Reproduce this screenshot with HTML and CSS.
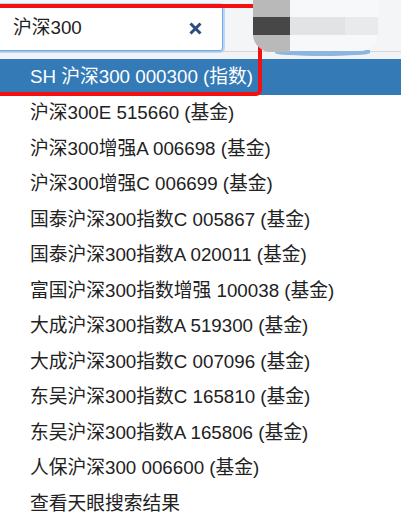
FILE: index.html
```html
<!DOCTYPE html>
<html lang="zh-CN">
<head>
<meta charset="utf-8">
<title>搜索</title>
<link rel="stylesheet" href="styles.css">
</head>
<body>
<div class="header">
  <div class="bar">
    <div class="search">
      <span class="query">沪深300</span>
      <svg class="clear" width="13" height="13" viewBox="0 0 13 13"><path d="M1.5 1.5L11.5 11.5M11.5 1.5L1.5 11.5" stroke="#2b4c7e" stroke-width="3" stroke-linecap="butt"/></svg>
    </div>
    <div class="blur">
      <div class="blur-gray"><div class="blur-dark"></div></div>
      <div class="blur-panel">
        <div class="stripe s1"></div>
        <div class="stripe s2"></div>
      </div>
    </div>
  </div>
</div>
<ul class="results">
  <li class="item active">SH 沪深300 000300 (指数)</li>
  <li class="item">沪深300E 515660 (基金)</li>
  <li class="item">沪深300增强A 006698 (基金)</li>
  <li class="item">沪深300增强C 006699 (基金)</li>
  <li class="item">国泰沪深300指数C 005867 (基金)</li>
  <li class="item">国泰沪深300指数A 020011 (基金)</li>
  <li class="item">富国沪深300指数增强 100038 (基金)</li>
  <li class="item">大成沪深300指数A 519300 (基金)</li>
  <li class="item">大成沪深300指数C 007096 (基金)</li>
  <li class="item">东吴沪深300指数C 165810 (基金)</li>
  <li class="item">东吴沪深300指数A 165806 (基金)</li>
  <li class="item">人保沪深300 006600 (基金)</li>
  <li class="item">查看天眼搜索结果</li>
</ul>
<div class="mark"></div>
</body>
</html>
```
FILE: styles.css
```css
html, body {
  margin: 0;
  padding: 0;
  background: #ffffff;
  overflow: hidden;
}
body {
  position: relative;
  font-family: "Liberation Sans", Arial, "Noto Sans CJK SC", sans-serif;
  width: 401px;
  height: 523px;
}
.header {
  height: 59px;
  background: #f1f3f6;
}
.bar {
  height: 51px;
  border-bottom: 1px solid #d4d6d9;
  display: flex;
  align-items: flex-start;
  background: #f4f5f7;
}
.search {
  margin-left: -10px;
  margin-top: 5px;
  width: 233px;
  height: 46px;
  box-sizing: border-box;
  background: #ffffff;
  border: 1px solid #6aaaea;
  border-radius: 3px;
  box-shadow: 0 0 0 2px rgba(140, 190, 240, 0.55);
  display: flex;
  align-items: center;
  padding-left: 22px;
  padding-right: 20px;
}
.query {
  flex: 1;
  font-size: 18.75px;
  color: #222222;
  line-height: 22px;
}
.clear {
  display: block;
}
.blur {
  margin-left: 30px;
  display: flex;
  height: 52px;
  position: relative;
}
.blur::after {
  content: "";
  position: absolute;
  left: 22px;
  right: 8px;
  bottom: -4px;
  height: 6px;
  border-radius: 0 0 50% 50%;
  background: #8cb6de;
  z-index: 0;
}
.blur-gray {
  width: 37px;
  height: 52px;
  background: #b9b9b9;
  border-bottom-left-radius: 18px;
  padding-top: 17px;
  box-sizing: border-box;
  position: relative;
  z-index: 1;
}
.blur-dark {
  height: 18px;
  background: #474747;
}
.blur-panel {
  width: 88px;
  height: 51px;
  background: #f7f8fa;
  border-bottom-right-radius: 18px;
  padding-top: 17px;
  box-sizing: border-box;
  display: flex;
  align-items: flex-start;
  position: relative;
  z-index: 1;
}
.stripe {
  height: 18px;
}
.s1 {
  width: 55px;
  background: #e2e3e4;
}
.s2 {
  width: 33px;
  background: #e9eaec;
}
.results {
  list-style: none;
  margin: 0;
  padding: 0;
}
.item {
  font-size: 18.75px;
  line-height: 35.5px;
  height: 35.5px;
  padding-left: 30px;
  color: #222222;
  white-space: nowrap;
}
.item.active {
  background: #337ab7;
  color: #ffffff;
  height: 36px;
  line-height: 36px;
}
.mark {
  position: absolute;
  left: -10px;
  top: 4px;
  width: 272px;
  height: 92px;
  box-sizing: border-box;
  border: 4px solid #f21010;
  border-radius: 6px;
  pointer-events: none;
}
```
